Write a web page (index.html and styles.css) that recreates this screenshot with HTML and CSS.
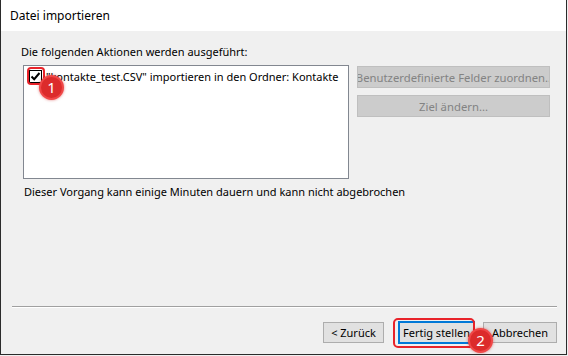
FILE: index.html
```html
<!DOCTYPE html>
<html lang="de">
<head>
    <meta charset="UTF-8">
    <title>Datei importieren</title>
    <link rel="stylesheet" href="styles.css">
</head>
<body>
    <div class="window">
        <div class="titlebar">Datei importieren</div>
        <div class="dialog">
            <div class="main">
                <p class="label">Die folgenden Aktionen werden ausgeführt:</p>
                <div class="row">
                    <div class="list">
                        <div class="item">
                            <span class="check">
                                <svg width="11" height="11" viewBox="0 0 11 11">
                                    <path d="M1.5 5.5 L4.2 8.2 L9.5 2" fill="none" stroke="#000" stroke-width="2"/>
                                </svg>
                            </span>
                            <span class="item-text">"kontakte_test.CSV" importieren in den Ordner: Kontakte</span>
                        </div>
                    </div>
                    <div class="side">
                        <button class="btn disabled">Benutzerdefinierte Felder zuordnen..</button>
                        <button class="btn disabled">Ziel ändern...</button>
                    </div>
                </div>
                <p class="note">Dieser Vorgang kann einige Minuten dauern und kann nicht abgebrochen</p>
            </div>
            <div class="sep"></div>
            <div class="footer">
                <button class="btn back">&lt; Zurück</button>
                <button class="btn primary">Fertig stellen</button>
                <button class="btn cancel">Abbrechen</button>
            </div>
        </div>

        <div class="mark frame-1"></div>
        <div class="mark badge badge-1">1</div>
        <div class="mark frame-2"></div>
        <div class="mark badge badge-2">2</div>
    </div>
</body>
</html>
```

FILE: styles.css
```css
* {
    box-sizing: border-box;
    margin: 0;
    padding: 0;
}

body {
    font-family: 'Noto Sans', 'Open Sans', sans-serif;
    font-size: 11px;
    color: #000;
    background: #f0f0f0;
    width: 568px;
    height: 356px;
    overflow: hidden;
}

.window {
    position: relative;
    width: 567px;
    height: 355px;
    display: flex;
    flex-direction: column;
    border-left: 1px solid #2b2b2b;
    border-right: 1px solid #2b2b2b;
    border-bottom: 1px solid #2b2b2b;
    background: #f0f0f0;
}

.titlebar {
    height: 31px;
    background: #fff;
    padding-left: 9px;
    line-height: 31px;
    font-size: 12px;
}

.dialog {
    flex: 1;
    display: flex;
    flex-direction: column;
}

.main {
    flex: 1;
    padding: 13px 0 0 20px;
}

.label {
    line-height: 16px;
    margin-bottom: 5px;
}

.row {
    display: flex;
    gap: 8px;
    margin-left: 2px;
}

.list {
    width: 326px;
    height: 114px;
    background: #fff;
    border: 1px solid #828790;
    padding: 3px 0 0 5px;
}

.item {
    display: flex;
    align-items: center;
    gap: 4px;
    line-height: 15px;
}

.check {
    width: 13px;
    height: 13px;
    border: 1px solid #000;
    background: #fff;
    display: flex;
    align-items: center;
    justify-content: center;
}

.side {
    display: flex;
    flex-direction: column;
    gap: 7px;
    padding-top: 1px;
}

.btn {
    font-family: inherit;
    font-size: 11px;
    height: 21px;
    background: #e1e1e1;
    border: 1px solid #adadad;
    color: #000;
    display: flex;
    align-items: center;
    justify-content: center;
    white-space: nowrap;
    overflow: hidden;
}

.btn.disabled {
    width: 193px;
    height: 22px;
    font-size: 11.3px;
    background: #cccccc;
    border-color: #bfbfbf;
    color: #838383;
}

.note {
    line-height: 16px;
    margin: 5px 0 0 3px;
}

.sep {
    height: 2px;
    margin: 0 9px 0 11px;
    border-top: 1px solid #a0a0a0;
    border-bottom: 1px solid #fff;
}

.footer {
    display: flex;
    justify-content: flex-end;
    padding: 13px 9px 10px 0;
}

.back {
    width: 61px;
    margin-top: 1px;
}

.primary {
    width: 77px;
    height: 23px;
    margin-left: 14px;
    border: 2px solid #0078d7;
}

.cancel {
    width: 74px;
    margin-left: 8px;
    margin-top: 1px;
}

/* annotations drawn on top of the screenshot */
.mark {
    position: absolute;
}

.frame-1,
.frame-2 {
    border: 2px solid #e8232a;
    border-radius: 4px;
}

.frame-1 {
    left: 26px;
    top: 67px;
    width: 18px;
    height: 18px;
}

.frame-2 {
    left: 392px;
    top: 318px;
    width: 82px;
    height: 30px;
    border-radius: 5px;
}

.badge {
    width: 25px;
    height: 25px;
    border-radius: 50%;
    background: #dc2b2b;
    border: 2px solid #f04848;
    box-shadow: 0 0 3px rgba(200, 0, 0, 0.5);
    color: #fff;
    font-size: 15px;
    line-height: 21px;
    text-align: center;
}

.badge-1 {
    left: 38px;
    top: 75px;
}

.badge-2 {
    left: 467px;
    top: 328px;
}
```
